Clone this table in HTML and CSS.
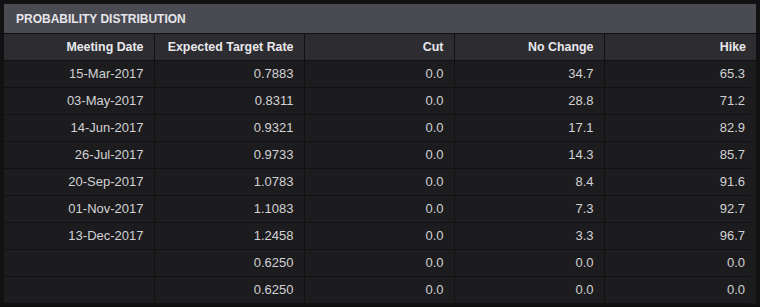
FILE: index.html
```html
<!DOCTYPE html>
<html lang="en">
<head>
  <meta charset="UTF-8">
  <title>Probability Distribution</title>
  <link rel="stylesheet" href="styles.css">
</head>
<body>

<div class="panel">
  <div class="panel-title">PROBABILITY DISTRIBUTION</div>

  <!-- column headers -->
  <table class="grid grid-head">
    <colgroup>
      <col class="c-date"><col class="c-rate"><col class="c-cut"><col class="c-none"><col>
    </colgroup>
    <tr>
      <th>Meeting Date</th>
      <th>Expected Target Rate</th>
      <th>Cut</th>
      <th>No Change</th>
      <th>Hike</th>
    </tr>
  </table>

  <!-- rows -->
  <div class="grid-scroll">
    <table class="grid grid-body">
      <colgroup>
        <col class="c-date"><col class="c-rate"><col class="c-cut"><col class="c-none"><col>
      </colgroup>
      <tr><td>15-Mar-2017</td><td>0.7883</td><td>0.0</td><td>34.7</td><td>65.3</td></tr>
      <tr><td>03-May-2017</td><td>0.8311</td><td>0.0</td><td>28.8</td><td>71.2</td></tr>
      <tr><td>14-Jun-2017</td><td>0.9321</td><td>0.0</td><td>17.1</td><td>82.9</td></tr>
      <tr><td>26-Jul-2017</td><td>0.9733</td><td>0.0</td><td>14.3</td><td>85.7</td></tr>
      <tr><td>20-Sep-2017</td><td>1.0783</td><td>0.0</td><td>8.4</td><td>91.6</td></tr>
      <tr><td>01-Nov-2017</td><td>1.1083</td><td>0.0</td><td>7.3</td><td>92.7</td></tr>
      <tr><td>13-Dec-2017</td><td>1.2458</td><td>0.0</td><td>3.3</td><td>96.7</td></tr>
      <tr><td></td><td>0.6250</td><td>0.0</td><td>0.0</td><td>0.0</td></tr>
      <tr><td></td><td>0.6250</td><td>0.0</td><td>0.0</td><td>0.0</td></tr>
    </table>
  </div>
</div>

</body>
</html>
```

FILE: styles.css
```css
body {
  margin: 0;
  padding: 4px;
  background: #111112;
  font-family: "Liberation Sans", Arial, sans-serif;
  color: #d2d2d4;
}

.panel {
  width: 752px;
  background: #1c1c1f;
}

.panel-title {
  height: 29px;
  line-height: 30px;
  padding-left: 12px;
  background: #4a4a52;
  border-bottom: 1px solid #111112;
  color: #e6e6ea;
  font-size: 12px;
  font-weight: bold;
}

.grid {
  border-collapse: collapse;
  table-layout: fixed;
  font-size: 13px;
}

.grid col.c-date,
.grid col.c-rate,
.grid col.c-cut,
.grid col.c-none {
  width: 150px;
}

.grid th,
.grid td {
  text-align: right;
  padding: 0 10px 0 0;
  height: 26px;
  border-left: 1px solid #111112;
  border-bottom: 1px solid #111112;
  white-space: nowrap;
}

.grid th:first-child,
.grid td:first-child {
  border-left: none;
}

.grid-head {
  width: 752px;
  background: #2d2d31;
}

.grid-head th {
  font-size: 12.4px;
  font-weight: bold;
  color: #e8e8ec;
}

.grid-scroll {
  height: 243px;
  overflow-y: scroll;
}

.grid-scroll::-webkit-scrollbar {
  width: 6px;
}

.grid-scroll::-webkit-scrollbar-track {
  background: #2a2a2e;
}

.grid-body {
  width: 746px;
  background: #1c1c1f;
}

.grid-body td {
  height: 25px;
  padding-bottom: 1px;
}

.grid-body td:last-child {
  padding-right: 5px;
}
```
